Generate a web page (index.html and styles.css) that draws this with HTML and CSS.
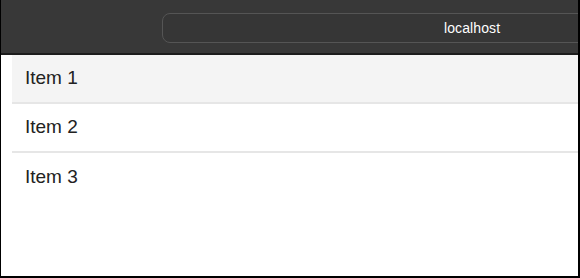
FILE: index.html
```html
<!DOCTYPE html>
<html>
<head>
<meta charset="utf-8">
<link rel="stylesheet" href="styles.css">
</head>
<body>
<div class="frame">
  <div class="toolbar">
    <div class="urlfield"><span class="url">localhost</span></div>
  </div>
  <ul class="list">
    <li class="row row-active">Item 1</li>
    <li class="row">Item 2</li>
    <li class="row row-last">Item 3</li>
  </ul>
</div>
</body>
</html>
```

FILE: styles.css
```css
html, body {
  margin: 0;
  padding: 0;
  background: #fff;
}
.frame {
  width: 580px;
  height: 278px;
  box-sizing: border-box;
  border-left: 1px solid #000;
  border-right: 2px solid #000;
  border-bottom: 2px solid #000;
  overflow: hidden;
  font-family: "Liberation Sans", Arial, sans-serif;
}
.toolbar {
  box-sizing: border-box;
  height: 55px;
  background: #383838;
  border-bottom: 2px solid #1c1c1c;
  display: flex;
  align-items: flex-start;
  padding-top: 13px;
}
.urlfield {
  margin-left: 161px;
  flex: 0 0 auto;
  width: 440px;
  height: 30px;
  box-sizing: border-box;
  border: 1px solid #555;
  border-radius: 8px;
  background: #363636;
  display: flex;
  align-items: center;
  padding-left: 281px;
}
.url {
  color: #fff;
  font-size: 14px;
  letter-spacing: 0.1px;
}
.list {
  list-style: none;
  margin: 0 0 0 11px;
  padding: 0;
}
.row {
  height: 49px;
  box-sizing: border-box;
  display: flex;
  align-items: center;
  padding: 0 0 1px 13px;
  font-size: 19px;
  color: #222;
  border-bottom: 2px solid #e6e6e6;
}
.row-active {
  background: #f4f4f4;
}
.row-last {
  border-bottom: none;
}
```
